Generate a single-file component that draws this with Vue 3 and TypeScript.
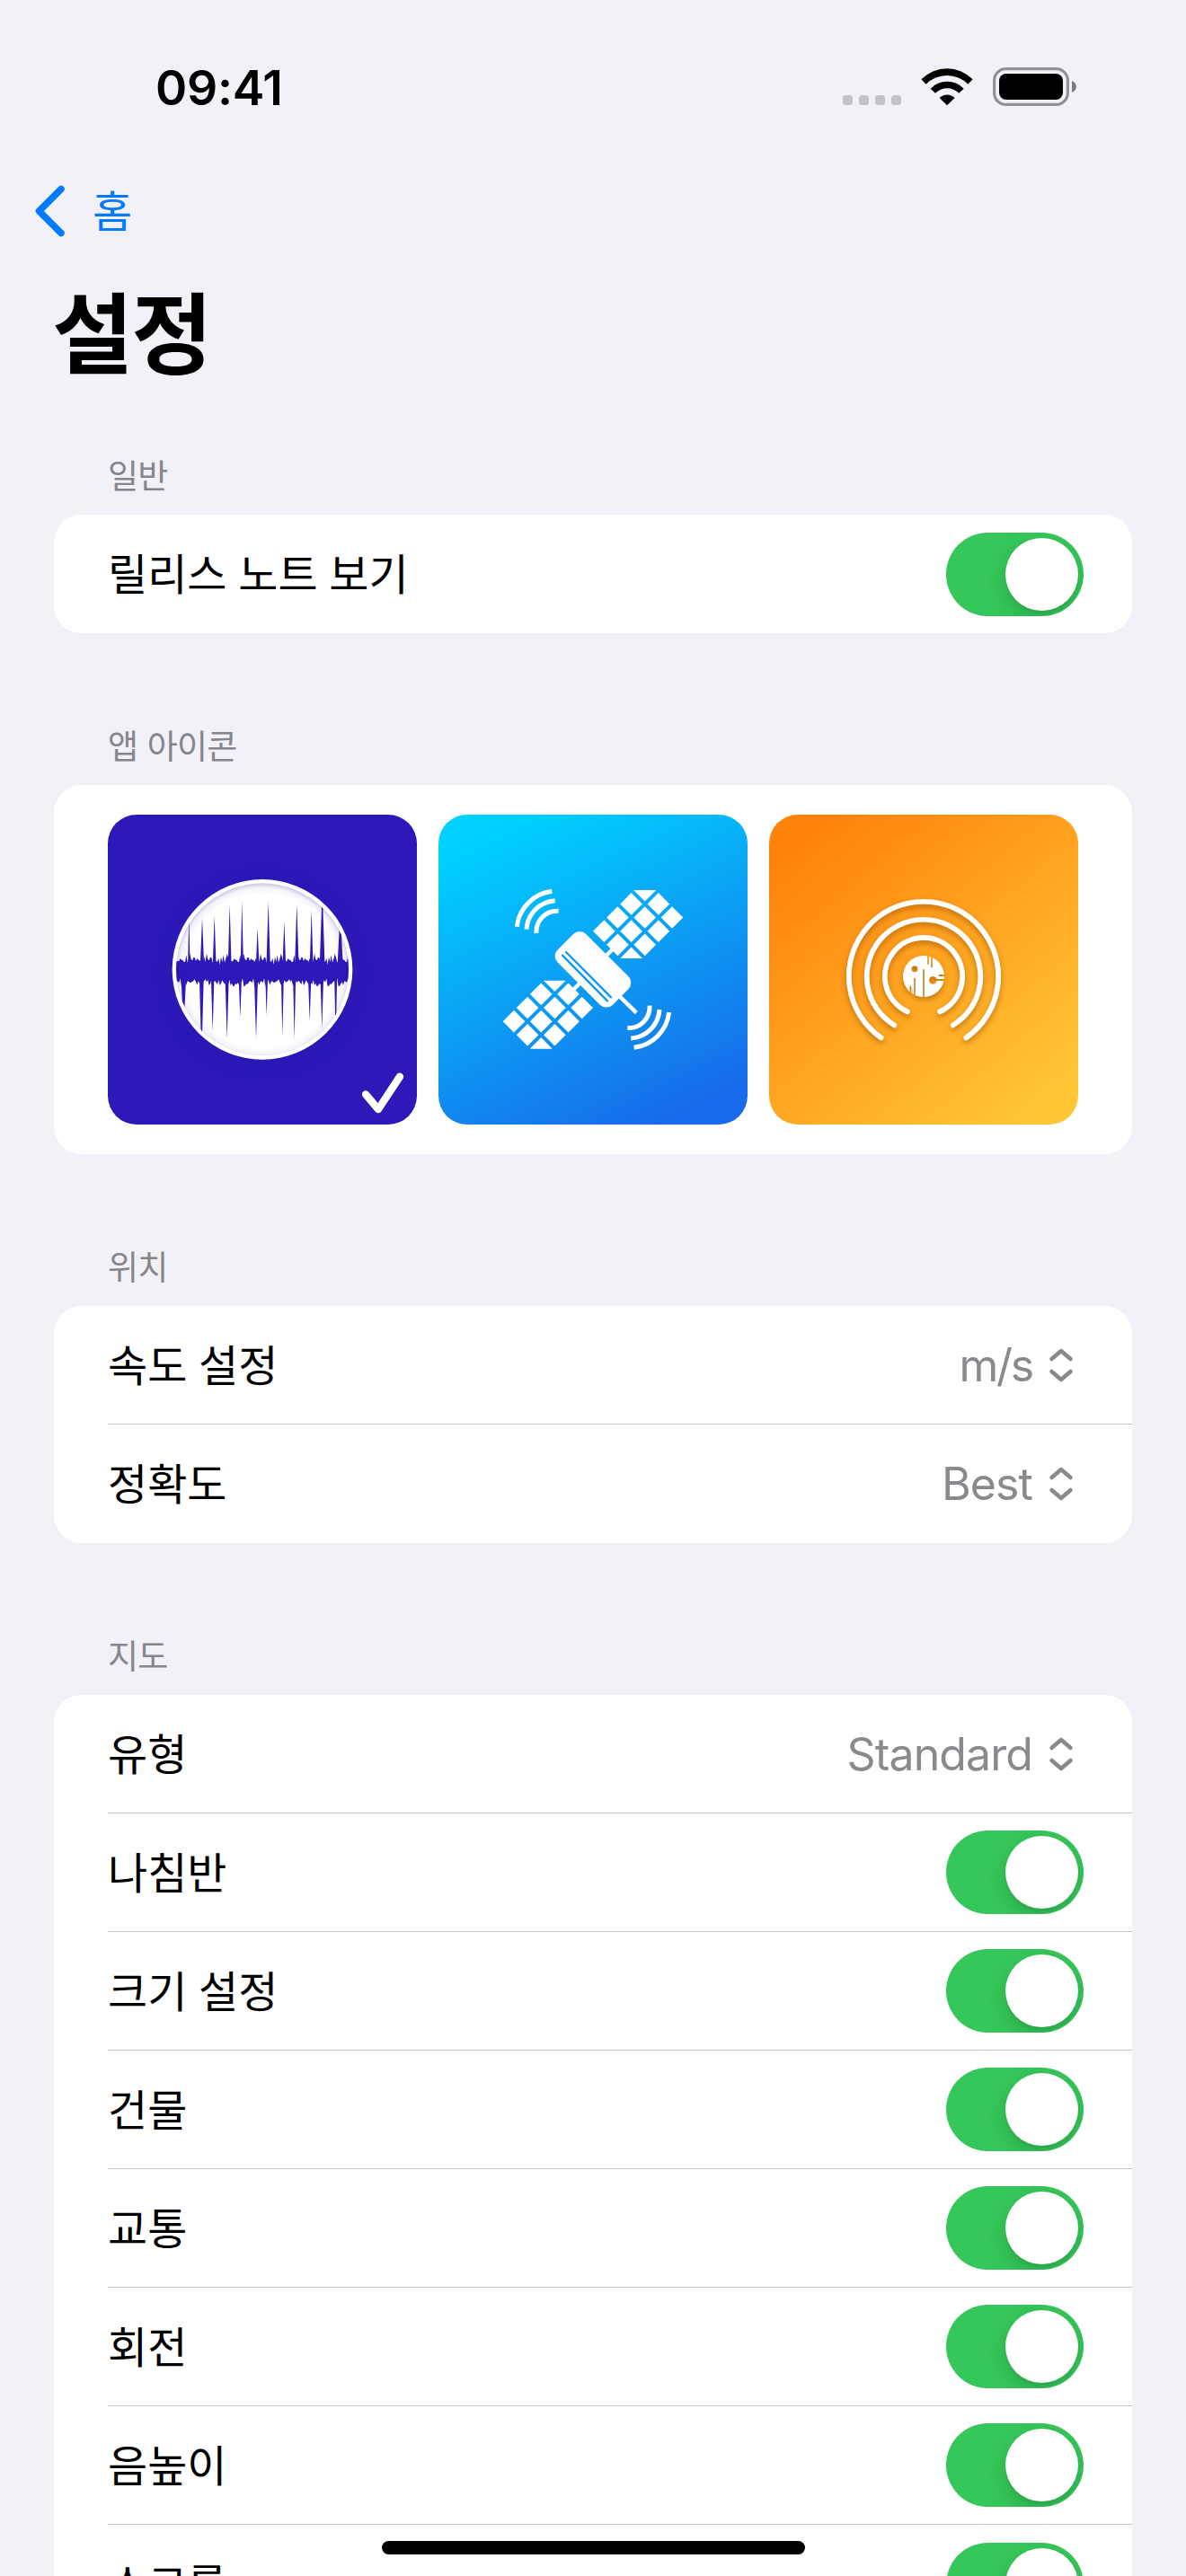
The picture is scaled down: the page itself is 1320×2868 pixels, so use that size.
<script setup lang="ts">
import { ref } from 'vue'

interface PickerRow {
  label: string
  value: string
  tight?: boolean
}

interface ToggleRow {
  label: string
  on: boolean
}

const releaseNotes = ref<ToggleRow>({ label: '릴리스 노트 보기', on: true })

const locationRows: PickerRow[] = [
  { label: '속도 설정', value: 'm/s', tight: true },
  { label: '정확도', value: 'Best' },
]

const mapType: PickerRow = { label: '유형', value: 'Standard' }

const mapToggles = ref<ToggleRow[]>([
  { label: '나침반', on: true },
  { label: '크기 설정', on: true },
  { label: '건물', on: true },
  { label: '교통', on: true },
  { label: '회전', on: true },
  { label: '음높이', on: true },
  { label: '스크롤', on: true },
])

const selectedIcon = ref(0)

// Waveform: a noisy band with narrow spikes above and below it.
const noiseTop = [528, 541, 536, 530, 543, 533, 538, 545, 540, 536, 552, 520, 515, 528, 540, 531, 543, 526, 545, 534]
const noiseBottom = [610, 618, 607, 622, 612, 604, 625, 609, 616, 601, 612, 620, 603, 608, 614, 598, 611, 623, 606, 618]

function bandPath(): string {
  const top: string[] = []
  const bottom: string[] = []
  for (let i = 0, x = 252; x <= 842; i++, x += 4) {
    const t = noiseTop[(i * 7 + Math.floor(i / 9)) % 20]
    const b = noiseBottom[(i * 11 + Math.floor(i / 7)) % 20]
    top.push(`${x} ${t}`)
    bottom.unshift(`${x} ${b}`)
  }
  return `M${top.join('L')}L${bottom.join('L')}Z`
}

const waveBand = bandPath()

const spikes: [number, number, number][] = [
  [301, 390, 4], [345, 396, 7], [386, 388, 6], [437, 352, 6], [478, 340, 5],
  [530, 430, 6], [566, 342, 7], [619, 408, 6], [661, 350, 7], [710, 370, 6],
  [746, 300, 9], [806, 380, 10],
  [283, 760, 10], [343, 860, 8], [380, 776, 6], [428, 800, 7], [472, 728, 6],
  [525, 800, 7], [560, 722, 5], [613, 788, 5], [653, 800, 5], [704, 740, 6],
  [745, 766, 6], [791, 800, 5],
]

const panelCells: [number, number][] = []
for (let i = 0; i < 4; i++) {
  for (let j = 0; j < 3; j++) {
    panelCells.push([577 + 45.4 * (i + j), 440 + 45.4 * (j - i)])
  }
}
</script>

<template>
  <div class="screen">
    <header class="status">
      <span class="time">09:41</span>
      <div class="indicators">
        <div class="cell-dots"><i v-for="n in 4" :key="n"></i></div>
        <svg class="wifi" viewBox="433 104 174 128">
          <path d="M434 144A120 120 0 0 1 606 144L590 160A99 99 0 0 0 450 160Z" />
          <path d="M465 175A77 77 0 0 1 576 175L560 190A56 56 0 0 0 481 190Z" />
          <path d="M495 206A36 36 0 0 1 546 206L520 231Z" />
        </svg>
        <svg class="battery" viewBox="0 0 94 43">
          <rect x="1.6" y="1.6" width="81.8" height="39.8" rx="13" fill="none" stroke="#929196" stroke-width="3.2" />
          <rect x="7" y="7" width="71" height="29" rx="8" />
          <path d="M88 15C94.5 17.5 94.5 25.500 88 28Z" fill="#7c7b80" />
        </svg>
      </div>
    </header>

    <nav class="nav">
      <svg class="back" viewBox="0 0 36 60">
        <path d="M30 5.500L5.500 30L30 54.500" />
      </svg>
      <span>홈</span>
    </nav>

    <h1 class="title">설정</h1>

    <section>
      <h2>일반</h2>
      <div class="card">
        <div class="row">
          <span class="label">{{ releaseNotes.label }}</span>
          <button class="switch" :class="{ on: releaseNotes.on }" @click="releaseNotes.on = !releaseNotes.on"><i></i></button>
        </div>
      </div>
    </section>

    <section>
      <h2>앱 아이콘</h2>
      <div class="card icons">
        <svg class="tile" viewBox="30 51 1032 1035" @click="selectedIcon = 0">
          <defs>
            <clipPath id="dial"><circle cx="546" cy="568" r="288" /></clipPath>
            <radialGradient id="inset" gradientUnits="userSpaceOnUse" cx="546" cy="573" r="293">
              <stop offset="0.88" stop-color="#120080" stop-opacity="0" />
              <stop offset="0.95" stop-color="#120080" stop-opacity="0.05" />
              <stop offset="1" stop-color="#120080" stop-opacity="0.22" />
            </radialGradient>
            <filter id="halo" x="-40%" y="-40%" width="180%" height="180%"><feGaussianBlur stdDeviation="32" /></filter>
          </defs>
          <rect x="30" y="51" width="1032" height="1035" fill="#2c19b8" />
          <circle cx="546" cy="580" r="300" fill="#2512a8" opacity="0.4" filter="url(#halo)" />
          <circle cx="546" cy="568" r="301" fill="#fff" />
          <g clip-path="url(#dial)">
            <path :d="waveBand" fill="#2c19b8" />
            <path
              v-for="(s, i) in spikes"
              :key="i"
              :d="`M${s[0] - s[2]} 568L${s[0]} ${s[1]}L${s[0] + s[2]} 568Z`"
              fill="#2c19b8"
            />
            <circle cx="546" cy="568" r="289" fill="url(#inset)" />
          </g>
          <path v-if="selectedIcon === 0" d="M891 985L933 1035L1005 926" fill="none" stroke="#fff" stroke-width="25" stroke-linecap="round" stroke-linejoin="round" />
        </svg>

        <svg class="tile" viewBox="24 51 1032 1035" @click="selectedIcon = 1">
          <defs>
            <linearGradient id="sky" gradientUnits="userSpaceOnUse" x1="283" y1="62" x2="770" y2="1085">
              <stop offset="0" stop-color="#00d2ff" />
              <stop offset="1" stop-color="#176ae9" />
            </linearGradient>
            <clipPath id="panelClip"><rect x="520" y="303" width="340" height="228" /></clipPath>
            <g id="wing">
              <g clip-path="url(#panelClip)">
                <path v-for="(c, i) in panelCells" :key="i" :d="`M${c[0] - 37} ${c[1]}l37 -37l37 37l-37 37Z`" />
              </g>
              <path d="M580 526L606 500" stroke="#fff" stroke-width="13" />
              <g fill="none" stroke="#fff" stroke-width="15">
                <path d="M286 425A134 134 0 0 1 403 307" />
                <path d="M318 434A102 102 0 0 1 413 338" />
                <path d="M351 447A69 69 0 0 1 425 373" />
              </g>
            </g>
          </defs>
          <rect x="24" y="51" width="1032" height="1035" fill="url(#sky)" />
          <g fill="#fff">
            <use href="#wing" />
            <use href="#wing" transform="rotate(180 540 568)" />
            <rect x="410" y="501" width="260" height="134" rx="30" transform="rotate(45 540 568)" />
            <path d="M627 656L685 713" stroke="#fff" stroke-width="13" />
          </g>
          <path d="M450 510L600 661M438 521L588 673" stroke="#0f97f2" stroke-width="7" stroke-linecap="round" />
          <path v-if="selectedIcon === 1" d="M885 985L927 1035L999 926" fill="none" stroke="#fff" stroke-width="25" stroke-linecap="round" stroke-linejoin="round" />
        </svg>

        <svg class="tile" viewBox="18 51 1032 1035" @click="selectedIcon = 2">
          <defs>
            <linearGradient id="sun" gradientUnits="userSpaceOnUse" x1="143" y1="106" x2="925" y2="1030">
              <stop offset="0" stop-color="#ff820a" />
              <stop offset="1" stop-color="#ffc636" />
            </linearGradient>
            <filter id="drop" x="-20%" y="-20%" width="140%" height="140%">
              <feDropShadow dx="0" dy="10" stdDeviation="9" flood-color="#7a3c00" flood-opacity="0.5" />
            </filter>
            <mask id="circuit">
              <rect x="440" y="500" width="190" height="180" fill="#fff" />
              <circle cx="504" cy="566" r="10.500" />
              <circle cx="565" cy="604" r="13" />
              <path d="M570 603H610M584 588H610M534 568V670M504 597V670M490 623V650M549 500V551M561 500V562" fill="none" stroke="#000" stroke-width="5.500" />
              <path d="M496 632V660" stroke="#000" stroke-width="2" />
            </mask>
          </defs>
          <rect x="18" y="51" width="1032" height="1035" fill="url(#sun)" />
          <g filter="url(#drop)">
            <g fill="none" stroke="#fff" stroke-width="17" stroke-linecap="round">
              <path d="M392 796A249.500 249.500 0 1 1 676 796" />
              <path d="M436 754A190 190 0 1 1 632 754" />
              <path d="M480 709A129.500 129.500 0 1 1 588 709" />
            </g>
            <circle cx="534" cy="591" r="69" fill="#fff" mask="url(#circuit)" />
          </g>
          <path v-if="selectedIcon === 2" d="M879 985L921 1035L993 926" fill="none" stroke="#fff" stroke-width="25" stroke-linecap="round" stroke-linejoin="round" />
        </svg>
      </div>
    </section>

    <section>
      <h2>위치</h2>
      <div class="card">
        <div v-for="row in locationRows" :key="row.label" class="row">
          <span class="label">{{ row.label }}</span>
          <span class="value" :class="{ tight: row.tight }">{{ row.value }}</span>
          <svg class="updown" viewBox="0 0 28 40"><path d="M3.500 13L14 4L24.500 13M3.500 27L14 36L24.500 27" /></svg>
        </div>
      </div>
    </section>

    <section>
      <h2>지도</h2>
      <div class="card">
        <div class="row">
          <span class="label">{{ mapType.label }}</span>
          <span class="value">{{ mapType.value }}</span>
          <svg class="updown" viewBox="0 0 28 40"><path d="M3.500 13L14 4L24.500 13M3.500 27L14 36L24.500 27" /></svg>
        </div>
        <div v-for="row in mapToggles" :key="row.label" class="row">
          <span class="label">{{ row.label }}</span>
          <button class="switch" :class="{ on: row.on }" @click="row.on = !row.on"><i></i></button>
        </div>
      </div>
    </section>

    <div class="home-indicator"></div>
  </div>
</template>

<style>
body {
  margin: 0;
  background: #f2f1f7;
}
</style>

<style scoped>
.screen {
  position: relative;
  box-sizing: border-box;
  width: 1320px;
  height: 2868px;
  overflow: hidden;
  background: #f2f1f7;
  color: #000;
  font-family: Inter, 'Noto Sans CJK KR', sans-serif;
}

.status {
  display: flex;
  justify-content: space-between;
  box-sizing: border-box;
  height: 186px;
  padding: 75px 121px 0 173px;
}

.time {
  height: 44px;
  font-size: 53.500px;
  font-weight: 600;
  line-height: 46px;
  letter-spacing: -0.3px;
}

.indicators {
  display: flex;
  align-items: flex-start;
}

.cell-dots {
  display: flex;
  gap: 7px;
  margin: 31px 22px 0 0;
}

.cell-dots i {
  width: 11px;
  height: 11px;
  border-radius: 3.500px;
  background: #c3c2c7;
}

.wifi {
  width: 58px;
  height: 42.700px;
  margin-right: 22px;
}

.battery {
  width: 94px;
  height: 43px;
}

.nav {
  display: flex;
  align-items: center;
  height: 98px;
  padding-left: 38px;
  color: #007aff;
  font-family: 'Noto Sans CJK KR', sans-serif;
  font-size: 48px;
}

.nav span {
  height: 98px;
  line-height: 92px;
}

.back {
  width: 36px;
  height: 60px;
  margin-right: 29px;
}

.back path {
  fill: none;
  stroke: #007aff;
  stroke-width: 7.500;
  stroke-linecap: round;
  stroke-linejoin: round;
}

.title {
  height: 189px;
  margin: 0;
  padding-left: 58px;
  font-family: 'Noto Sans CJK KR', sans-serif;
  font-size: 98px;
  font-weight: 700;
  line-height: 162px;
  letter-spacing: -2px;
}

section + section {
  margin-top: 69px;
}

h2 {
  box-sizing: border-box;
  height: 100px;
  margin: 0;
  padding: 25px 0 0 120px;
  color: #86858b;
  font-family: 'Noto Sans CJK KR', sans-serif;
  font-size: 37px;
  font-weight: 400;
  line-height: 60px;
  letter-spacing: -0.8px;
  word-spacing: 3px;
}

.card {
  margin: 0 60px;
  border-radius: 31px;
  background: #fff;
}

.row {
  display: flex;
  align-items: center;
  box-sizing: border-box;
  height: 132px;
  padding-right: 54px;
  margin-left: 60px;
}

.row:not(:last-child) {
  border-bottom: 1px solid #c5c5c7;
}

.label {
  flex: 1;
  height: 70px;
  font-family: 'Noto Sans CJK KR', sans-serif;
  font-size: 48px;
  line-height: 64px;
  word-spacing: 2px;
}

.value {
  color: #8a8a8e;
  font-size: 50px;
  line-height: 70px;
  letter-spacing: -0.9px;
}

.value.tight {
  letter-spacing: -2.2px;
}

.updown {
  width: 28px;
  height: 40px;
  margin: 0 11px 0 18px;
}

.updown path {
  fill: none;
  stroke: #8a8a8e;
  stroke-width: 4.500;
  stroke-linecap: round;
  stroke-linejoin: round;
}

.switch {
  box-sizing: border-box;
  width: 153px;
  height: 93px;
  padding: 6px;
  border: 0;
  border-radius: 47px;
  overflow: hidden;
  background: #e9e9ea;
}

.switch i {
  display: block;
  width: 81px;
  height: 81px;
  border-radius: 50%;
  background: #fff;
  box-shadow: 0 9px 24px rgba(0, 0, 0, 0.16), 0 3px 3px rgba(0, 0, 0, 0.05);
}

.switch.on {
  background: #35c759;
}

.switch.on i {
  margin-left: 60px;
}

.icons {
  display: flex;
  gap: 24px;
  padding: 33px 60px;
}

.tile {
  width: 344px;
  height: 345px;
  border-radius: 32px;
}

.home-indicator {
  position: absolute;
  left: 425px;
  bottom: 24px;
  width: 471px;
  height: 15px;
  border-radius: 8px;
  background: #000;
}
</style>
